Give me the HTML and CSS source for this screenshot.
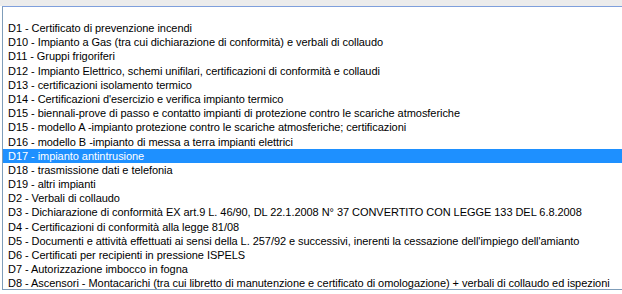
FILE: index.html
```html
<!DOCTYPE html>
<html lang="it">
<head>
<meta charset="utf-8">
<title>Elenco documenti</title>
<link rel="stylesheet" href="styles.css">
</head>
<body>
<div class="topbar"></div>
<div class="listbox">
  <ul class="options">
    <li class="opt">D1 - Certificato di prevenzione incendi</li>
    <li class="opt">D10 - Impianto a Gas (tra cui dichiarazione di conformità) e verbali di collaudo</li>
    <li class="opt">D11 - Gruppi frigoriferi</li>
    <li class="opt">D12 - Impianto Elettrico, schemi unifilari, certificazioni di conformità e collaudi</li>
    <li class="opt">D13 - certificazioni isolamento termico</li>
    <li class="opt">D14 - Certificazioni d'esercizio e verifica impianto termico</li>
    <li class="opt">D15 - biennali-prove di passo e contatto impianti di protezione contro le scariche atmosferiche</li>
    <li class="opt">D15 - modello A -impianto protezione contro le scariche atmosferiche; certificazioni</li>
    <li class="opt">D16 - modello B -impianto di messa a terra impianti elettrici</li>
    <li class="opt selected">D17 - impianto antintrusione</li>
    <li class="opt">D18 - trasmissione dati e telefonia</li>
    <li class="opt">D19 - altri impianti</li>
    <li class="opt">D2 - Verbali di collaudo</li>
    <li class="opt">D3 - Dichiarazione di conformità EX art.9 L. 46/90, DL 22.1.2008 N° 37 CONVERTITO CON LEGGE 133 DEL 6.8.2008</li>
    <li class="opt">D4 - Certificazioni di conformità alla legge 81/08</li>
    <li class="opt">D5 - Documenti e attività effettuati ai sensi della L. 257/92 e successivi, inerenti la cessazione dell'impiego dell'amianto</li>
    <li class="opt">D6 - Certificati per recipienti in pressione ISPELS</li>
    <li class="opt">D7 - Autorizzazione imbocco in fogna</li>
    <li class="opt">D8 - Ascensori - Montacarichi (tra cui libretto di manutenzione e certificato di omologazione) + verbali di collaudo ed ispezioni</li>
  </ul>
</div>
</body>
</html>
```

FILE: styles.css
```css
html, body {
  margin: 0;
  padding: 0;
  background: #ffffff;
}

body {
  width: 622px;
  height: 294px;
  overflow: hidden;
  font-family: "Liberation Sans", Arial, sans-serif;
  font-size: 11px;
  color: #000000;
}

.topbar {
  height: 6px;
  background: #ececec;
}

.listbox {
  margin-left: 2px;
  border-top: 1px solid #7f9fdc;
  border-left: 1px solid #7f9db9;
  border-bottom: 1px solid #7f9db9;
  height: 284px;
  box-sizing: border-box;
  padding-top: 14px;
  overflow: hidden;
}

.options {
  list-style: none;
  margin: 0;
  padding: 0;
}

.opt {
  height: 14.2px;
  line-height: 14.2px;
  padding-left: 5px;
  white-space: nowrap;
  overflow: hidden;
  letter-spacing: -0.05px;
}

.selected {
  background: #1e90ff;
  color: #ffffff;
}
```
